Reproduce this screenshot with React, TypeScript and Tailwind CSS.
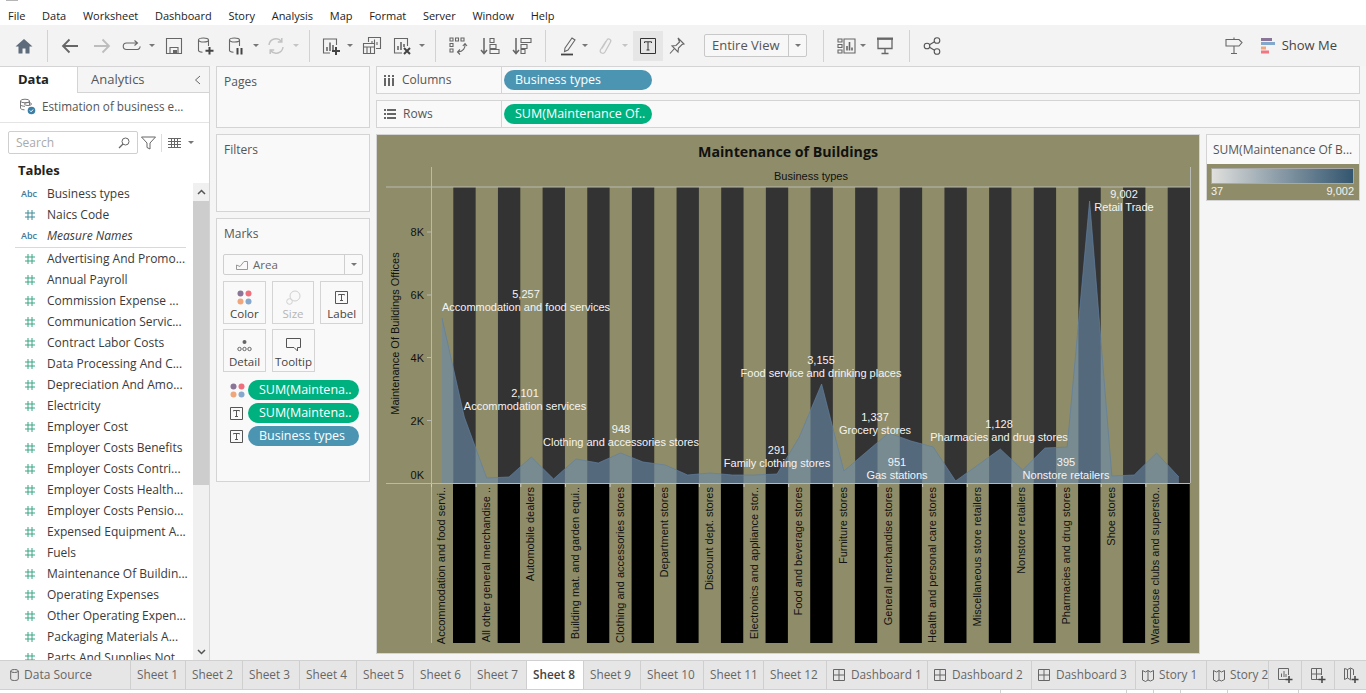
import type { ReactNode } from "react"

const ui = "font-['Open_Sans',_sans-serif]"

// toolbar icon frame, 20x20
function I({ children, className = "text-[#666]" }: { children: ReactNode; className?: string }) {
  return (
    <svg width="20" height="20" viewBox="0 0 20 20" fill="none" stroke="currentColor" strokeWidth="1.100" className={`shrink-0 ${className}`}>
      {children}
    </svg>
  )
}

function Caret({ className = "ml-[6px]", light = false }: { className?: string; light?: boolean }) {
  return (
    <svg width="8" height="5" viewBox="0 0 8 5" className={`shrink-0 ${className}`}>
      <path d="M1 1h6L4 4z" fill={light ? "#c4c4c4" : "#777"} />
    </svg>
  )
}

function Sep({ className }: { className: string }) {
  return <div className={`w-px h-[32px] bg-[#d2d2d2] shrink-0 ${className}`} />
}

function Toolbar() {
  return (
    <div className="h-[41px] bg-[#f3f3f3] flex items-center pl-[14px] pr-[29px]">
      <I className="text-[#5e6b7b]"><path d="M10 3 1.500 10.500H4.500V17.500H8.500V12.500H11.500V17.500H15.500V10.500H18.500Z" fill="currentColor" stroke="none" /></I>
      <Sep className="ml-[13px]" />
      <div className="ml-[12px]"><I><path d="M18 10H3M9.500 3.500 3 10l6.500 6.500" strokeWidth="1.800" /></I></div>
      <div className="ml-[12px]"><I className="text-[#bdbdbd]"><path d="M2 10H17M10.500 3.500 17 10l-6.500 6.500" strokeWidth="1.800" /></I></div>
      <div className="ml-[10px]"><I><path d="M15 7H4.500a2.800 2.800 0 0 0 0 6.500h11a2.800 2.800 0 0 0 2.500-3.200M12.500 4.500 15.500 7l-3 2.500" /></I></div>
      <Caret />
      <div className="ml-[8px]"><I><path d="M2.500 2.500h15v15h-15z" /><path d="M6 17v-5.500h8V17" /><path d="M9 14h4v3H9z" fill="currentColor" stroke="none" /></I></div>
      <div className="ml-[11px]"><I><ellipse cx="8.500" cy="4" rx="5" ry="2" /><path d="M3.500 4v10.500c0 1 1.500 1.500 4 1.800M13.500 4v6" /><path d="M14.500 11v7.500M10.500 14.800h8" stroke="#444" strokeWidth="2" /></I></div>
      <div className="ml-[11px]"><I><ellipse cx="8.500" cy="4" rx="5" ry="2" /><path d="M3.500 4v10.500c0 1 1.500 1.500 4 1.800M13.500 4v6" /><path d="M11.500 12v6.500M15.500 12v6.500" stroke="#444" strokeWidth="2" /></I></div>
      <Caret />
      <div className="ml-[6px]"><I className="text-[#c2c2c2]"><path d="M3 9a7 7 0 0 1 12.500-3.500M17 11a7 7 0 0 1-12.500 3.500M15.800 2v4h-4M4.200 18v-4h4" strokeWidth="1.500" /></I></div>
      <Caret light />
      <Sep className="ml-[9px]" />
      <div className="ml-[11px]"><I><path d="M9 17H2.500V3h13v6" /><path d="M6 15v-4M9 15V6.500M12 15V9" strokeWidth="1.600" /><path d="M15 11v8M11 15h8" stroke="#444" strokeWidth="2" /></I></div>
      <Caret className="ml-[5px]" />
      <div className="ml-[8px]"><I><path d="M6.500 6V1.500h12v11H14" /><path d="M10 9V5M12.500 9V3.500M15 9V6" /><path d="M1.500 7.500h11v10h-11z" fill="#f3f3f3" /><path d="M1.500 11h11M5 11v6.500M8.500 11v6.500" /></I></div>
      <div className="ml-[10px]"><I><path d="M10 17H2.500V2.500h13V10" /><path d="M6 14v-4M9 14V6M12 11V8" strokeWidth="1.600" /><path d="m12 12 6 6M18 12l-6 6" stroke="#444" strokeWidth="2" /></I></div>
      <Caret />
      <Sep className="ml-[9px]" />
      <div className="ml-[12px]"><I><path d="M2 2h3v3H2zM7.500 2h3v3h-3zM13 2h3v3h-3zM2 7.500h3v3H2zM2 13h3v3H2z" /><path d="M17 8c.5 4-2 7.500-7 8M12 13.500 9.500 16l2.500 2.500M14.800 10l2.200-2.500 2 2.500" /></I></div>
      <div className="ml-[12px]"><I><path d="M4 2v15M1 14l3 3.500L7 14" strokeWidth="1.500" /><path d="M10 2.500h4v4h-4zM10 8.500h6v4h-6zM10 13.500h9v4h-9z" /></I></div>
      <div className="ml-[12px]"><I><path d="M4 2v15M1 14l3 3.500L7 14" strokeWidth="1.500" /><path d="M9 2.500h10v4H9zM9 8.500h6v4H9zM9 13.500h4v4H9z" /></I></div>
      <Sep className="ml-[13px]" />
      <div className="ml-[13px]"><I><path d="m6 12 7-10 3 2-7 10-3.500 1.500z" /><path d="M2 18.500h12" stroke="#444" strokeWidth="1.800" /></I></div>
      <Caret className="ml-[2px]" />
      <div className="ml-[6px]"><I className="text-[#c6c6c6]"><path d="M7 12.500 12 4c1.300-2.200 4.800-.4 3.500 2L10 16c-1.700 2.800-6 .6-4.500-2.300L11 5" strokeWidth="1.300" /></I></div>
      <Caret light />
      <div className="ml-[4px] w-[30px] h-[30px] bg-[#e6e6e6] flex items-center justify-center shrink-0">
        <svg width="16" height="16" viewBox="0 0 16 16" fill="none" stroke="#333" strokeWidth="1"><path d="M.5.500h15v15H.5z" /><path d="M4.500 5V3.800h7V5M8 4v8M6.500 12h3" /></svg>
      </div>
      <div className="ml-[4px]"><I><path d="m11 2 6 6-2 .5-3.500 3.500-.5 4L5 10l4-.5L12.500 6z" /><path d="m7.500 12.500-4.500 5" /></I></div>
      <div className={`ml-[17px] w-[103px] h-[23px] shrink-0 border border-[#c8c8c8] rounded-[2px] bg-[#f7f7f7] flex items-center ${ui}`}>
        <span className="flex-1 pl-[7px] text-[13px] text-[#555]">Entire View</span>
        <span className="w-[18px] h-full border-l border-[#c8c8c8] flex items-center justify-center"><Caret className="" /></span>
      </div>
      <Sep className="ml-[16px]" />
      <div className="ml-[12px]"><I><path d="M2 3h4v3H2zM2 8.500h4v3H2zM2 14h4v3H2zM8 3h11v14H8z" /><path d="M11 14.500V10M13.500 14.500V6M16 14.500V11.500" strokeWidth="1.600" /></I></div>
      <Caret className="ml-[3px]" />
      <div className="ml-[8px]"><I><path d="M2 3h16M3 3v9.500h14V3M10 12.500v5M6.500 17.500h7" strokeWidth="1.300" /><path d="M2 2.500h16" strokeWidth="2" /></I></div>
      <Sep className="ml-[14px]" />
      <div className="ml-[12px]"><I className="text-[#555]"><circle cx="5" cy="10" r="2.800" /><circle cx="15" cy="4.500" r="2.800" /><circle cx="15" cy="15.500" r="2.800" /><path d="m7.500 8.700 5-3M7.500 11.300l5 3" /></I></div>
      <div className="ml-auto"><I><path d="M10 1.500v2M10 10v7.500M7 17.500h6M2 3.500h13l3 3-3 3.500H2z" /></I></div>
      <svg width="15" height="16" viewBox="0 0 15 16" className="ml-[17px] shrink-0">
        <path d="M0 0h11v3H0z" fill="#8a7498" /><path d="M0 4h14v3H0z" fill="#82a8cc" /><path d="M0 8.500h5v3H0z" fill="#f0a67c" /><path d="M0 12.500h8v3H0z" fill="#f2757f" />
      </svg>
      <span className={`ml-[6px] text-[13px] text-[#444] ${ui}`}>Show Me</span>
    </div>
  )
}

function Hash({ color }: { color: string }) {
  return (
    <svg width="10" height="10" viewBox="0 0 10 10" stroke={color} strokeWidth="1" className="shrink-0">
      <path d="M3 0v10M7 0v10M0 3h10M0 7h10" />
    </svg>
  )
}

function FieldRow({ name, abc, dim, italic }: { name: string; abc?: boolean; dim?: boolean; italic?: boolean }) {
  return (
    <div className="h-[21px] flex items-center">
      <div className="w-[47px] pl-[21px] flex items-center shrink-0">
        {abc ? (
          <span className="text-[9px] text-[#3c7a99] font-semibold leading-none">Abc</span>
        ) : (
          <div className="pl-[4px]"><Hash color={dim ? "#3c8a96" : "#39a583"} /></div>
        )}
      </div>
      <span className={`text-[12px] text-[#3a3a3a] whitespace-nowrap ${italic ? "italic" : ""}`}>{name}</span>
    </div>
  )
}

const measures = [
  "Advertising And Promo...",
  "Annual Payroll",
  "Commission Expense ...",
  "Communication Servic...",
  "Contract Labor Costs",
  "Data Processing And C...",
  "Depreciation And Amo...",
  "Electricity",
  "Employer Cost",
  "Employer Costs Benefits",
  "Employer Costs Contri...",
  "Employer Costs Health...",
  "Employer Costs Pensio...",
  "Expensed Equipment A...",
  "Fuels",
  "Maintenance Of Buildin...",
  "Operating Expenses",
  "Other Operating Expen...",
  "Packaging Materials A...",
  "Parts And Supplies Not...",
]

function DataPane() {
  return (
    <aside className={`w-[210px] shrink-0 bg-white border-r border-t border-[#d4d4d4] flex flex-col overflow-hidden ${ui}`}>
      <div className="h-[26px] flex shrink-0">
        <div className="w-[77px] flex items-center pl-[18px] text-[13px] font-bold text-[#222]">Data</div>
        <div className="flex-1 bg-[#f5f5f5] border-l border-b border-[#d4d4d4] flex items-center pl-[13px] pr-[8px] text-[13px] text-[#555]">
          <span className="flex-1">Analytics</span>
          <svg width="7" height="10" viewBox="0 0 7 10" fill="none" stroke="#666"><path d="M6 1 1.500 5 6 9" /></svg>
        </div>
      </div>
      <div className="h-[30px] flex items-center pl-[19px] pb-[2px] border-b border-[#e4e4e4] shrink-0">
        <svg width="17" height="17" viewBox="0 0 17 17" fill="none" stroke="#777" className="shrink-0">
          <ellipse cx="6" cy="3" rx="4.500" ry="1.800" /><path d="M1.500 3v7c0 1 1.500 1.800 4 1.800M10.500 3v4M1.500 6.500c0 1 2 1.800 4.500 1.800" />
          <ellipse cx="9" cy="6" rx="3.500" ry="1.500" />
          <circle cx="12.500" cy="12.500" r="3.800" fill="#3c7fa6" stroke="none" /><path d="m10.800 12.500 1.300 1.300 2-2.300" stroke="#fff" />
        </svg>
        <span className="ml-[6px] text-[11.700px] text-[#555] whitespace-nowrap">Estimation of business e...</span>
      </div>
      <div className="flex items-center pl-[8px] pt-[8px] shrink-0">
        <div className="w-[130px] h-[23px] border border-[#cfcfcf] rounded-[2px] flex items-center px-[7px]">
          <span className="flex-1 text-[12px] text-[#aaa]">Search</span>
          <svg width="12" height="12" viewBox="0 0 12 12" fill="none" stroke="#666"><circle cx="7.500" cy="4.500" r="3.500" /><path d="M5 7 1 11" strokeWidth="1.300" /></svg>
        </div>
        <svg width="15" height="14" viewBox="0 0 15 14" fill="none" stroke="#666" className="ml-[3px]"><path d="M.5 1h14L9 7v6l-3-1.500V7z" /></svg>
        <div className="w-px h-[18px] bg-[#ddd] ml-[5px]" />
        <svg width="13" height="10" viewBox="0 0 13 10" className="ml-[6px]"><path d="M0 0h13v1H0zM0 3h13v1H0zM0 6h13v1H0zM0 9h13v1H0zM3 0h1v10H3zM6 0h1v10H6zM9 0h1v10H9z" fill="#666" /></svg>
        <Caret className="ml-[6px]" />
      </div>
      <div className="h-[29px] flex items-center pl-[18px] pt-[5px] text-[13px] font-bold text-[#222] shrink-0">Tables</div>
      <div className="flex flex-1 min-h-0">
        <div className="w-[193px] overflow-hidden shrink-0">
          <FieldRow name="Business types" abc />
          <FieldRow name="Naics Code" dim />
          <FieldRow name="Measure Names" abc italic />
          <div className="h-[2px] border-b border-[#d9d9d9] ml-[15px] mr-[7px]" />
          {measures.map((m) => (
            <FieldRow key={m} name={m} />
          ))}
        </div>
        <div className="w-[16px] bg-[#f0f0f0] flex flex-col">
          <div className="h-[18px] flex items-center justify-center shrink-0">
            <svg width="9" height="6" viewBox="0 0 9 6" fill="none" stroke="#555" strokeWidth="1.500"><path d="m1 5 3.500-3.500L8 5" /></svg>
          </div>
          <div className="h-[284px] bg-[#cdcdcd] shrink-0" />
          <div className="flex-1" />
          <div className="h-[17px] flex items-center justify-center shrink-0">
            <svg width="9" height="6" viewBox="0 0 9 6" fill="none" stroke="#555" strokeWidth="1.500"><path d="m1 1 3.500 3.500L8 1" /></svg>
          </div>
        </div>
      </div>
    </aside>
  )
}

function Dots() {
  return (
    <svg width="15" height="15" viewBox="0 0 15 15" className="shrink-0">
      <circle cx="3.500" cy="3.500" r="3" fill="#8a7498" /><circle cx="11.500" cy="3.500" r="3" fill="#ef6f7c" />
      <circle cx="3.500" cy="11.500" r="3" fill="#f0a67c" /><circle cx="11.500" cy="11.500" r="3" fill="#86a8cc" />
    </svg>
  )
}

function TBox({ size = 13 }: { size?: number }) {
  return (
    <svg width={size} height={size} viewBox="0 0 13 13" fill="none" stroke="#555" className="shrink-0">
      <path d="M.5.500h12v12H.5z" /><path d="M3.500 4.300V3.500h6v.8M6.500 3.500v6M5 9.500h3" />
    </svg>
  )
}

function MarkBtn({ icon, label, muted, className = "" }: { icon: ReactNode; label: string; muted?: boolean; className?: string }) {
  return (
    <div className={`w-[43px] h-[43px] border border-[#d4d4d4] flex flex-col items-center pt-[6px] ${className}`}>
      <div className="h-[18px] flex items-center">{icon}</div>
      <span className={`text-[11.500px] leading-[16px] ${muted ? "text-[#b5b5b5]" : "text-[#444]"}`}>{label}</span>
    </div>
  )
}

function Pill({ label, color, className }: { label: string; color: "green" | "blue"; className: string }) {
  return (
    <div className={`h-[20px] rounded-full flex items-center pl-[11px] text-[12.500px] text-white whitespace-nowrap ${color === "green" ? "bg-[#00b180]" : "bg-[#4b94b2]"} ${className}`}>
      {label}
    </div>
  )
}

function MarksCard() {
  return (
    <div className={`h-[264px] border border-[#d4d4d4] bg-[#f9f9f9] px-[6px] ${ui}`}>
      <div className="h-[35px] flex items-center pl-[1px] pb-[5px] text-[12px] text-[#555]">Marks</div>
      <div className="h-[21px] border border-[#cfcfcf] rounded-[2px] flex items-center">
        <svg width="12" height="10" viewBox="0 0 12 10" fill="none" stroke="#999" className="ml-[12px]"><path d="M.5 9.500V5L4 6.500 8 1.500h3.500v8z" /></svg>
        <span className="ml-[5px] flex-1 pt-[1px] text-[11.500px] text-[#666]">Area</span>
        <span className="w-[18px] h-full border-l border-[#cfcfcf] flex items-center justify-center"><Caret className="" /></span>
      </div>
      <div className="flex gap-[6px] mt-[6px]">
        <MarkBtn label="Color" icon={<Dots />} />
        <MarkBtn label="Size" muted icon={
          <svg width="15" height="15" viewBox="0 0 15 15" fill="none" stroke="#d0d0d0"><circle cx="9" cy="6" r="5" fill="#f9f9f9" /><circle cx="3.500" cy="11.500" r="2.800" fill="#f9f9f9" /></svg>
        } />
        <MarkBtn label="Label" icon={<TBox />} />
      </div>
      <div className="flex gap-[6px] mt-[5px]">
        <MarkBtn label="Detail" icon={
          <svg width="15" height="13" viewBox="0 0 15 13" fill="none" stroke="#666"><circle cx="7.500" cy="3" r="2" fill="#666" stroke="none" /><circle cx="2.500" cy="10" r="1.700" /><circle cx="7.500" cy="10" r="1.700" /><circle cx="12.500" cy="10" r="1.700" /></svg>
        } />
        <MarkBtn label="Tooltip" icon={
          <svg width="15" height="14" viewBox="0 0 15 14" fill="none" stroke="#555"><path d="M.5.500h14v9h-3v3.500l-3.500-3.500H.5z" /></svg>
        } />
      </div>
      <div className="flex items-center mt-[8px] pl-[7px]"><Dots /><Pill label="SUM(Maintena.." color="green" className="ml-[3px] w-[111px]" /></div>
      <div className="flex items-center mt-[3px] pl-[7px]"><TBox /><Pill label="SUM(Maintena.." color="green" className="ml-[5px] w-[111px]" /></div>
      <div className="flex items-center mt-[3px] pl-[7px]"><TBox /><Pill label="Business types" color="blue" className="ml-[5px] w-[111px]" /></div>
    </div>
  )
}

// maintenance values as pixel positions above the zero line
const zeroY = 483.5
const pointY = [
  318, 417, 478, 477, 457, 479, 459, 463, 453, 462, 465, 475, 473, 475, 475, 474,
  437, 384, 471, 452, 433, 441, 447, 481, 465, 449, 470, 448, 447, 201, 476, 475, 453, 477,
]
const pointX = pointY.map((_, i) => 442 + i * 22.33)
const areaPath =
  `M${pointX[0]} ${zeroY} ` +
  pointY.map((y, i) => `L${pointX[i].toFixed(1)} ${y}`).join(" ") +
  ` L${pointX[33].toFixed(1)} ${zeroY}Z`
const linePath = pointY.map((y, i) => `${i ? "L" : "M"}${pointX[i].toFixed(1)} ${y}`).join(" ")

const columns = Array.from({ length: 17 }, (_, k) => 431 + k * 44.65)

const headerLabels = [
  "Accommodation and food servi..",
  "All other general merchandise ..",
  "Automobile dealers",
  "Building mat. and garden equi..",
  "Clothing and accessories stores",
  "Department stores",
  "Discount dept. stores",
  "Electronics and appliance stor..",
  "Food and beverage stores",
  "Furniture stores",
  "General merchandise stores",
  "Health and personal care stores",
  "Miscellaneous store retailers",
  "Nonstore retailers",
  "Pharmacies and drug stores",
  "Shoe stores",
  "Warehouse clubs and supersto..",
]

const dataLabels = [
  { x: 526, y: 294, value: "5,257", name: "Accommodation and food services" },
  { x: 525, y: 393, value: "2,101", name: "Accommodation services" },
  { x: 621, y: 429, value: "948", name: "Clothing and accessories stores" },
  { x: 777, y: 450, value: "291", name: "Family clothing stores" },
  { x: 821, y: 360, value: "3,155", name: "Food service and drinking places" },
  { x: 875, y: 417, value: "1,337", name: "Grocery stores" },
  { x: 897, y: 462, value: "951", name: "Gas stations" },
  { x: 999, y: 424, value: "1,128", name: "Pharmacies and drug stores" },
  { x: 1066, y: 462, value: "395", name: "Nonstore retailers" },
  { x: 1124, y: 194, value: "9,002", name: "Retail Trade" },
]

function Chart() {
  return (
    <svg width="822" height="518" viewBox="377 135 822 518" className="block" fontFamily="'Liberation Sans', sans-serif">
      <rect x="377" y="135" width="822" height="518" fill="#8f8d69" />
      <text x="788" y="157" textAnchor="middle" fontSize="14.200" fontWeight="700" fill="#111" fontFamily="'Open Sans', sans-serif">Maintenance of Buildings</text>
      <text x="811" y="180" textAnchor="middle" fontSize="11" fill="#111">Business types</text>

      {columns.map((x) => (
        <g key={x}>
          <rect x={x + 22.3} y="187" width="22.35" height="296.500" fill="#333333" />
          <rect x={x + 22} y="484" width="22.35" height="159" fill="#000000" />
        </g>
      ))}

      <path d={areaPath} fill="#6a8baa" fillOpacity="0.62" />
      <path d={linePath} fill="none" stroke="#5f7f9f" strokeOpacity="0.7" strokeWidth="1" />

      <path d="M386 187H1190M386 483.500H1190M431.500 167V643M1190.500 167V483" stroke="#b9b9b4" strokeWidth="1" fill="none" />
      {columns.map((x) => (
        <path key={x} d={`M${x + 0.5} 484v3`} stroke="#cfcfc8" />
      ))}
      {[
        ["8K", 232],
        ["6K", 295],
        ["4K", 357.5],
        ["2K", 420.5],
        ["0K", 475],
      ].map(([t, y]) => (
        <g key={t}>
          <text x="424" y={Number(y) + 4} textAnchor="end" fontSize="11" fill="#111">{t}</text>
          {t !== "0K" && <path d={`M427 ${y}h4`} stroke="#b9b9b4" />}
        </g>
      ))}
      <text transform="translate(399 333.500) rotate(-90)" textAnchor="middle" fontSize="11" fill="#111">Maintenance Of Buildings Offices</text>

      {headerLabels.map((t, i) => (
        <text key={t} transform={`translate(${445 + i * 44.65} 487) rotate(-90)`} textAnchor="end" fontSize="11" fill="#111">{t}</text>
      ))}

      {dataLabels.map((l) => (
        <g key={l.name} fill="#f4f4f4" fontSize="11" textAnchor="middle">
          <text x={l.x} y={l.y + 4}>{l.value}</text>
          <text x={l.x} y={l.y + 17}>{l.name}</text>
        </g>
      ))}
    </svg>
  )
}

function Shelf({ label, icon, children }: { label: string; icon: ReactNode; children: ReactNode }) {
  return (
    <div className={`h-[28px] border border-[#d4d4d4] bg-[#f9f9f9] flex items-center ${ui}`}>
      <div className="w-[125px] h-full border-r border-[#d4d4d4] flex items-center pl-[7px] shrink-0">
        {icon}
        <span className="ml-[7px] text-[12px] text-[#555]">{label}</span>
      </div>
      <div className="pl-[2px]">{children}</div>
    </div>
  )
}

const tabs = [
  { label: "Sheet 1", w: "w-[55px]" },
  { label: "Sheet 2", w: "w-[57px]" },
  { label: "Sheet 3", w: "w-[57px]" },
  { label: "Sheet 4", w: "w-[57px]" },
  { label: "Sheet 5", w: "w-[57px]" },
  { label: "Sheet 6", w: "w-[57px]" },
  { label: "Sheet 7", w: "w-[56px]" },
  { label: "Sheet 8", w: "w-[57px]", active: true },
  { label: "Sheet 9", w: "w-[57px]" },
  { label: "Sheet 10", w: "w-[63px]" },
  { label: "Sheet 11", w: "w-[60px]" },
  { label: "Sheet 12", w: "w-[63px]" },
  { label: "Dashboard 1", w: "w-[101px]", kind: "dash" },
  { label: "Dashboard 2", w: "w-[104px]", kind: "dash" },
  { label: "Dashboard 3", w: "w-[104px]", kind: "dash" },
  { label: "Story 1", w: "w-[71px]", kind: "story" },
  { label: "Story 2", w: "w-[62px]", kind: "story" },
]

function DashIcon() {
  return (
    <svg width="12" height="12" viewBox="0 0 12 12" fill="none" stroke="#666" className="shrink-0 mr-[6px]">
      <path d="M.5.500h11v11H.5zM.5 6h11M6 .5v11" />
    </svg>
  )
}

function StoryIcon() {
  return (
    <svg width="12" height="13" viewBox="0 0 12 13" fill="none" stroke="#666" className="shrink-0 mr-[5px]">
      <path d="M.5 1.500 3.500 3 6 1.500 8.500 3l3-1.500v9l-3 1.500L6 11l-2.500 1.500-3-1.500zM6 1.500V11" />
    </svg>
  )
}

function TabStrip() {
  return (
    <div className={`h-[30px] flex bg-[#e6e6e6] border-t border-b border-[#d0d0d0] shrink-0 overflow-hidden ${ui}`}>
      <div className="w-[131px] flex items-center pl-[10px] border-r border-[#cfcfcf] text-[12px] text-[#666] shrink-0">
        <svg width="9" height="12" viewBox="0 0 9 12" fill="none" stroke="#666" className="mr-[5px]"><ellipse cx="4.500" cy="2" rx="3.800" ry="1.500" /><path d="M.7 2v8c0 2 7.600 2 7.600 0V2" /></svg>
        Data Source
      </div>
      {tabs.map((t) => (
        <div
          key={t.label}
          className={`${t.w} shrink-0 flex items-center pl-[6px] border-r border-[#cfcfcf] text-[11.800px] whitespace-nowrap overflow-hidden ${t.active ? "bg-white font-semibold text-[#444]" : "text-[#666]"}`}
        >
          {t.kind === "dash" && <DashIcon />}
          {t.kind === "story" && <StoryIcon />}
          {t.label}
        </div>
      ))}
      <div className="w-[33px] flex items-center justify-center border-r border-[#cfcfcf] shrink-0">
        <svg width="16" height="16" viewBox="0 0 16 16" fill="none" stroke="#666"><path d="M9 12.500H1.500v-11h10V8M4.500 10V6.500M7 10V4M9 10V7" /><path d="M12 9v7M8.500 12.500h7" stroke="#444" strokeWidth="1.500" /></svg>
      </div>
      <div className="w-[33px] flex items-center justify-center border-r border-[#cfcfcf] shrink-0">
        <svg width="16" height="16" viewBox="0 0 16 16" fill="none" stroke="#666"><path d="M9 12.500H1.500v-11h10V8M1.500 7h10M6.500 1.500v11" /><path d="M12 9v7M8.500 12.500h7" stroke="#444" strokeWidth="1.500" /></svg>
      </div>
      <div className="w-[32px] flex items-center justify-center shrink-0">
        <svg width="16" height="16" viewBox="0 0 16 16" fill="none" stroke="#666"><path d="M8 13 4.500 11l-3 1.500v-11l3 1 3-1.500 3 1.500V8M4.500 2.500V11M7.500 1.500V12" /><path d="M12 9v7M8.500 12.500h7" stroke="#444" strokeWidth="1.500" /></svg>
      </div>
    </div>
  )
}

function StatusBar() {
  return (
    <div className="h-[3px] bg-white shrink-0 flex pl-[1000px]">
      <div className="w-[126px] border-l border-[#d0d0d0]" />
      <div className="w-[27px] border-l border-[#d0d0d0]" />
      <div className="w-[27px] border-l border-[#d0d0d0]" />
      <div className="w-[47px] border-l border-[#d0d0d0]" />
      <div className="w-[71px] border-l border-[#d0d0d0]" />
      <div className="flex-1 border-l border-[#d0d0d0]" />
    </div>
  )
}

const menus = ["File", "Data", "Worksheet", "Dashboard", "Story", "Analysis", "Map", "Format", "Server", "Window", "Help"]

export default function App() {
  return (
    <div className="w-[1366px] h-[693px] overflow-hidden flex flex-col bg-[#f5f5f5]">
      <div className="h-[1px] bg-white shrink-0 pl-[6px]"><div className="w-[12px] h-full bg-[#b5b5b5]" /></div>
      <div className={`h-[24px] bg-white shrink-0 flex items-center pl-[8px] pt-[7px] gap-[16.700px] text-[11px] text-[#222] ${ui}`}>
        {menus.map((m) => (
          <span key={m}>{m}</span>
        ))}
      </div>
      <Toolbar />
      <div className="flex flex-1 min-h-0">
        <DataPane />
        <div className="w-[154px] ml-[6px] flex flex-col gap-[6px] shrink-0">
          <div className={`h-[62px] border border-[#d4d4d4] bg-[#f9f9f9] pl-[7px] pt-[6px] text-[12px] text-[#555] ${ui}`}>Pages</div>
          <div className={`h-[78px] border border-[#d4d4d4] bg-[#f9f9f9] pl-[7px] pt-[6px] text-[12px] text-[#555] ${ui}`}>Filters</div>
          <MarksCard />
        </div>
        <div className="w-[984px] ml-[6px] flex flex-col gap-[6px] shrink-0">
          <Shelf label="Columns" icon={<svg width="11" height="11" viewBox="0 0 11 11" fill="#666"><path d="M0 3h2v8H0zM4 3h2v8H4zM8 3h2v8H8zM0 0h2v2H0zM4 0h2v2H4zM8 0h2v2H8z" /></svg>}>
            <Pill label="Business types" color="blue" className="w-[148px]" />
          </Shelf>
          <Shelf label="Rows" icon={<svg width="12" height="10" viewBox="0 0 12 10" fill="#666"><path d="M0 0h2v2H0zM3 0h9v2H3zM0 4h2v2H0zM3 4h9v2H3zM0 8h2v2H0zM3 8h9v2H3z" /></svg>}>
            <Pill label="SUM(Maintenance Of.." color="green" className="w-[148px]" />
          </Shelf>
          <div className="flex items-start">
            <div className="border border-[#d4d4d4] shrink-0"><Chart /></div>
            <div className={`w-[154px] h-[67px] ml-[6px] border border-[#d4d4d4] shrink-0 flex flex-col ${ui}`}>
              <div className="h-[29px] bg-[#f9f9f9] flex items-center pl-[6px] text-[12px] text-[#555] whitespace-nowrap shrink-0">SUM(Maintenance Of B...</div>
              <div className="flex-1 bg-[#8f8d69] pl-[4px] pr-[5px] pt-[4px]">
                <div className="h-[16px] border border-[#a8a8a8] bg-linear-to-r from-[#e0e0dd] to-[#33566f]" />
                <div className="flex justify-between text-[11px] leading-[14px] text-[#f2f2f2] font-['Liberation_Sans',_sans-serif]">
                  <span>37</span>
                  <span>9,002</span>
                </div>
              </div>
            </div>
          </div>
        </div>
      </div>
      <TabStrip />
      <StatusBar />
    </div>
  )
}
